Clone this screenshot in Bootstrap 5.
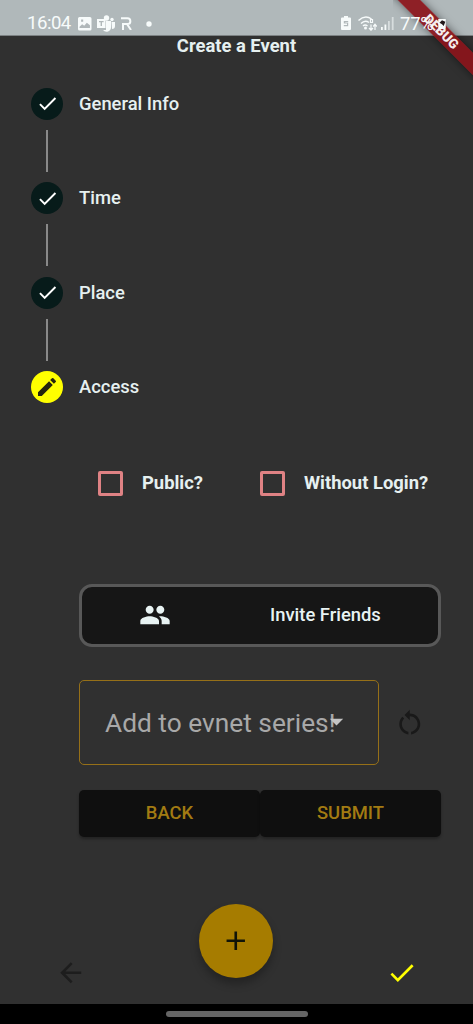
<!DOCTYPE html>
<html lang="en">
<head>
<meta charset="utf-8">
<meta name="viewport" content="width=device-width, initial-scale=1">
<title>Create a Event</title>
<link href="https://cdn.jsdelivr.net/npm/bootstrap@5.3.0/dist/css/bootstrap.min.css" rel="stylesheet">
<style>
html,body{height:100%}
body{background:#303030;color:#e6f0f0;font-family:Roboto,sans-serif;font-size:18.4px;line-height:22px;overflow:hidden}
svg{display:block;flex:none;fill:currentColor}
.screen{width:473px;height:1024px}
.status{height:35px;background:#b0b8ba;color:#f7fbfb;padding:11px 26px 0 27px;box-shadow:0 1px #7c8183}
.status > *{position:relative;z-index:2}
.status .clock{font-size:18.6px;line-height:25px;width:44px;letter-spacing:-.5px}
.status .pct{font-size:18.4px;line-height:25px;letter-spacing:-.2px;width:37px}
.status .debug-wrap{position:absolute;z-index:1;width:80px;height:80px;pointer-events:none}
.debug-band{width:140px;height:16px;left:-22px;top:24px;background:rgba(139,20,27,.93);transform:rotate(45deg);font-size:13.4px;line-height:16px;font-weight:900;box-shadow:0 0 8px rgba(0,0,0,.5);color:#f5eeee}
.page-title{height:22px;font-size:18.4px;line-height:22px}
.steps{padding:30.5px 0 0 31px}
.step-row{height:32px;gap:16px}
.dot{width:32px;height:32px;background:#071b1a;color:#fff}
.dot.now{background:#ff0;color:#25250e}
.link-line{width:2px;height:42px;margin:10.25px 0 10.25px 15px;background:#898989}
.step-body{padding:68px 32px 0 79px}
.checks{height:24px;padding-left:19px}
.box{width:25px;height:25px;border:3px solid #df8284;border-radius:2px}
.box + span{margin-left:19px}
.public-label{width:118px}
.invite{height:63px;margin-top:88.5px;border:3px solid #585858;border-radius:13px;background:#161616;color:#e8f3f3}
.series-row{margin-top:33.5px}
.series{width:300px;height:85px;border:1px solid #967018;border-radius:5px;font-size:26.3px;color:#a8a8a8;padding-left:25px}
.caret{left:329px;top:718px;width:15px;height:8px;color:#c4c4c4}
.actions{margin-top:24.5px}
.actions .btn{height:47px;background:#0f0f0f;color:#a27b12;border:0;border-radius:5px;font-size:18.4px;box-shadow:0 2px 3px rgba(0,0,0,.3)}
.bottom{height:100px;padding:0 56px 0 55px}
.bottom > svg{margin-top:53px}
.fab{width:74px;height:74px;background:#a67c00;color:#101408;box-shadow:0 6px 9px rgba(0,0,0,.28)}
.gesture{height:20px;background:#000}
.pill{width:142px;height:5.6px;background:#656565;border-radius:3px}
</style>
<script src="https://cdn.jsdelivr.net/npm/bootstrap@5.3.0/dist/js/bootstrap.bundle.min.js"></script>
</head>
<body>
<svg width="0" height="0" class="position-absolute">
  <symbol id="check" viewBox="0 0 24 24"><path d="M9 16.17 4.83 12l-1.42 1.41L9 19 21 7l-1.41-1.41z"/></symbol>
</svg>
<div class="screen d-flex flex-column position-relative overflow-hidden">
  <header class="status d-flex flex-shrink-0 position-relative">
    <div class="debug-wrap top-0 end-0 overflow-hidden">
      <div class="position-absolute debug-band text-center">DEBUG</div>
    </div>
    <div class="clock">16:04</div>
    <svg style="margin:6px 0 0 7px" width="13.500" height="13.500" viewBox="0 0 13 13"><path fill-rule="evenodd" d="M1.500 0h10A1.500 1.500 0 0 1 13 1.500v10a1.500 1.500 0 0 1-1.500 1.500h-10A1.500 1.500 0 0 1 0 11.500v-10A1.500 1.500 0 0 1 1.500 0zM1.500 10.500h10V8L8.500 5.500l-2.500 3L4 7 1.500 9.500zM3 2.500v2h2v-2z"/></svg>
    <svg style="margin:4px 0 0 5px" width="18" height="17" viewBox="0 0 18 17"><circle cx="9.500" cy="3" r="2.700"/><circle cx="15" cy="4.500" r="1.700"/><path d="M9 6h5v6a4.500 4.500 0 0 1-8 3h3zM14.500 7H18v4a3 3 0 0 1-3 3z"/><path fill-rule="evenodd" d="M0 4h8.500v9H0zM2 6v1.300h1.600V11H5V7.300h1.600V6z"/></svg>
    <svg style="margin:6px 0 0 6px" width="12" height="13" viewBox="0 0 12 13"><path fill="none" stroke="currentColor" stroke-width="2" d="M0 1.300h6.500a2.800 2.800 0 0 1 0 5.700H2v6M6 7l4 6"/></svg>
    <svg style="margin:10px 0 0 13px" width="6" height="6"><circle cx="3" cy="3" r="2.700"/></svg>
    <svg class="ms-auto" style="margin-top:5px" width="10" height="14" viewBox="0 0 10 14"><path fill-rule="evenodd" d="M3 0h4v1.500h2A1 1 0 0 1 10 2.500V13a1 1 0 0 1-1 1H1a1 1 0 0 1-1-1V2.500a1 1 0 0 1 1-1h2zM2.800 5v2.500H6V9H2.800v1.300h4.400V6.800H4.300V6.200h2.900V5z"/></svg>
    <svg style="margin:5px 0 0 7px" width="19" height="15" viewBox="0 0 19 15"><path fill="none" stroke="currentColor" stroke-width="1.500" d="M.5 4.500Q7-1.500 13.500 3M3 7.500Q7 3.500 11 6.500M5 10q2-2 4.500 0"/><circle cx="7.500" cy="12" r="1.500"/><path fill="none" stroke="currentColor" stroke-width="1.200" d="M12.500 3.500h2v3h-2zM13 14V8.500M11 12l2 2.200L15 12M17 14V8.500M15.200 10.500 17 8.300l1.800 2.200"/></svg>
    <svg style="margin:6px 0 0 4px" width="13" height="13" viewBox="0 0 13 13"><path d="M0 10h1.800v3H0zM3.500 7.500h1.800V13H3.500z"/><path opacity=".55" d="M7 4h1.800v9H7zM10.800 0h1.800v13h-1.800z"/></svg>
    <div class="pct" style="margin-left:6px">77%</div>
    <svg style="margin:6px 0 0" width="10" height="13" viewBox="0 0 12 14"><path d="M1.500 1.500h9v11a1 1 0 0 1-1 1h-7a1 1 0 0 1-1-1z"/><path fill="#211719" d="m3 6 3-3 4 2-2 5-2-2z"/></svg>
  </header>
  <h1 class="page-title text-center fw-bold mb-0 flex-shrink-0">Create a Event</h1>
  <section class="steps fw-medium">
    <div class="step-row d-flex align-items-center"><span class="dot rounded-circle d-flex align-items-center justify-content-center"><svg width="23" height="23"><use href="#check"/></svg></span>General Info</div>
    <div class="link-line"></div>
    <div class="step-row d-flex align-items-center"><span class="dot rounded-circle d-flex align-items-center justify-content-center"><svg width="23" height="23"><use href="#check"/></svg></span>Time</div>
    <div class="link-line"></div>
    <div class="step-row d-flex align-items-center"><span class="dot rounded-circle d-flex align-items-center justify-content-center"><svg width="23" height="23"><use href="#check"/></svg></span>Place</div>
    <div class="link-line"></div>
    <div class="step-row d-flex align-items-center"><span class="dot now rounded-circle d-flex align-items-center justify-content-center"><svg width="24" height="24" viewBox="0 0 24 24"><path d="M3 17.250V21h3.750L17.810 9.940l-3.750-3.750zM20.710 7.040a1 1 0 0 0 0-1.410l-2.340-2.340a1 1 0 0 0-1.410 0l-1.830 1.830 3.750 3.750z"/></svg></span>Access</div>
  </section>
  <main class="step-body">
    <div class="checks d-flex align-items-center fw-bold">
      <span class="box"></span><span class="public-label">Public?</span>
      <span class="box"></span><span>Without Login?</span>
    </div>
    <div class="invite d-flex align-items-center fw-medium">
      <svg style="margin-left:57px" width="32" height="32" viewBox="0 0 24 24"><path d="M16 11c1.660 0 2.990-1.340 2.990-3S17.660 5 16 5s-3 1.340-3 3 1.340 3 3 3zm-8 0c1.660 0 2.990-1.340 2.990-3S9.660 5 8 5 5 6.340 5 8s1.340 3 3 3zm0 2c-2.330 0-7 1.170-7 3.500V19h14v-2.500C15 14.170 10.330 13 8 13zm8 0c-.29 0-.62.020-.97.050C16.190 13.890 17 15.020 17 16.500V19h6v-2.500c0-2.330-4.670-3.500-7-3.500z"/></svg>
      <span style="margin-left:99px">Invite Friends</span>
    </div>
    <div class="series-row d-flex align-items-center">
      <div class="series d-flex align-items-center text-nowrap">Add to evnet series!</div>
      <svg style="color:#191919;margin-left:15px" width="31.500" height="31.500" viewBox="0 0 24 24"><path d="M12 5V2L8 6l4 4V7c3.310 0 6 2.690 6 6 0 2.970-2.170 5.430-5 5.910v2.020c3.950-.49 7-3.850 7-7.930 0-4.420-3.580-8-8-8zM6 13c0-1.650.67-3.150 1.760-4.240L6.340 7.340C4.900 8.790 4 10.790 4 13c0 4.080 3.050 7.440 7 7.930v-2.020C8.170 18.430 6 15.970 6 13z"/></svg>
    </div>
    <svg class="caret position-absolute" viewBox="0 0 15 8"><path d="M.8.800h13.400L7.500 7.500z"/></svg>
    <div class="actions d-flex">
      <button class="btn flex-fill w-50 fw-medium">BACK</button>
      <button class="btn flex-fill w-50 fw-medium">SUBMIT</button>
    </div>
  </main>
  <footer class="bottom mt-auto d-flex justify-content-between flex-shrink-0">
    <svg style="color:#1d1d1d" width="31.500" height="31.500" viewBox="0 0 24 24"><path d="M20 11H7.830l5.590-5.590L12 4l-8 8 8 8 1.410-1.410L7.830 13H20z"/></svg>
    <div class="fab rounded-circle d-flex align-items-center justify-content-center"><svg width="31.500" height="31.500" viewBox="0 0 24 24"><path d="M19 13h-6v6h-2v-6H5v-2h6V5h2v6h6z"/></svg></div>
    <svg style="color:#ff0" width="31.500" height="31.500"><use href="#check"/></svg>
  </footer>
  <div class="gesture flex-shrink-0 d-flex justify-content-center align-items-center"><div class="pill"></div></div>
</div>
</body>
</html>
